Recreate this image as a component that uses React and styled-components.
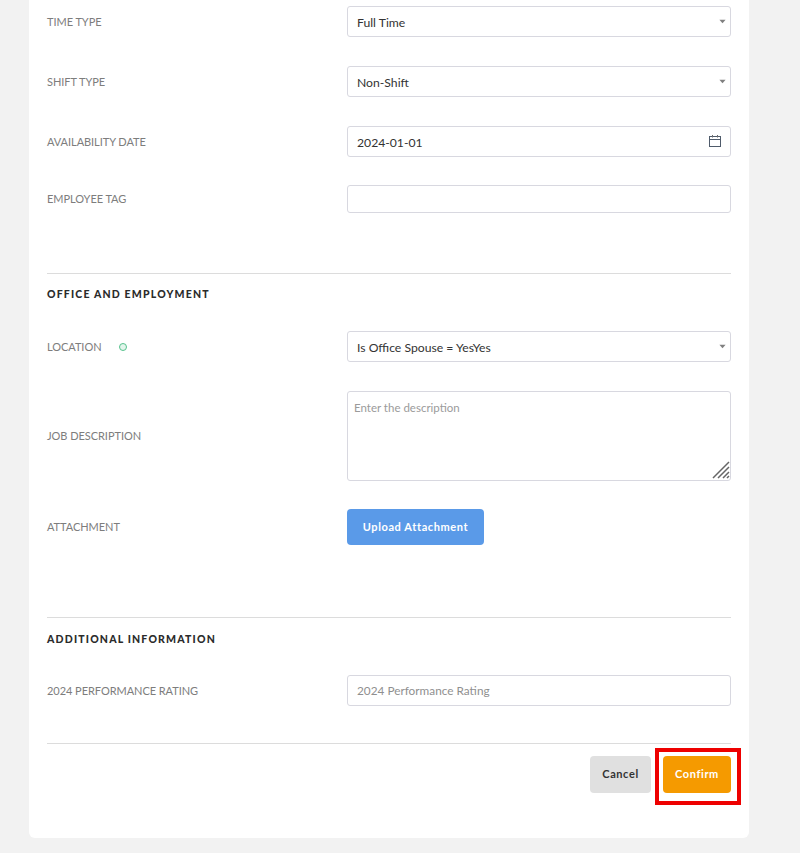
import React from 'react'
import styled, { createGlobalStyle } from 'styled-components'

const GlobalStyle = createGlobalStyle`
  html, body {
    margin: 0;
    padding: 0;
    background: #f2f2f2;
    font-family: Lato, "Liberation Sans", sans-serif;
  }
`

function Caret() {
  return (
    <CaretIcon viewBox="0 0 8 5">
      <path d="M0.5 0.5h7L4 4.5z" fill="#808080" />
    </CaretIcon>
  )
}

function CalendarIcon() {
  return (
    <DateIcon viewBox="0 0 12 12" fill="none">
      <rect x="0.5" y="1.5" width="11" height="10" stroke="#4f5b6b" />
      <path d="M0.5 4.5h11" stroke="#4f5b6b" />
      <path d="M3.5 0v2.5M8.5 0v2.5" stroke="#6b6b6b" />
    </DateIcon>
  )
}

function ResizeHandle() {
  return (
    <Handle viewBox="0 0 18 18" fill="none" stroke="#666" strokeWidth="1.5">
      <path d="M1 17L17 1M6 17L17 6M11 17L17 11M15 17l2-2" />
    </Handle>
  )
}

function App() {
  return (
    <Page>
      <GlobalStyle />
      <Card>
        <Row $gap={29}>
          <Label>TIME TYPE</Label>
          <SelectBox>Full Time<Caret /></SelectBox>
        </Row>
        <Row $gap={29}>
          <Label>SHIFT TYPE</Label>
          <SelectBox>Non-Shift<Caret /></SelectBox>
        </Row>
        <Row $gap={28}>
          <Label>AVAILABILITY DATE</Label>
          <SelectBox>2024-01-01<CalendarIcon /></SelectBox>
        </Row>
        <Row $gap={60}>
          <Label>EMPLOYEE TAG</Label>
          <TextField type="text" $height={28} />
        </Row>

        <Divider />
        <SectionTitle $top={14} $bottom={30}>OFFICE AND EMPLOYMENT</SectionTitle>
        <Row $gap={29}>
          <Label>
            LOCATION
            <StatusDot />
          </Label>
          <SelectBox>Is Office Spouse = YesYes<Caret /></SelectBox>
        </Row>
        <Row $gap={28}>
          <Label>JOB DESCRIPTION</Label>
          <AreaWrap>
            <TextArea placeholder="Enter the description" />
            <ResizeHandle />
          </AreaWrap>
        </Row>
        <Row $gap={72}>
          <Label>ATTACHMENT</Label>
          <div>
            <UploadButton>Upload Attachment</UploadButton>
          </div>
        </Row>

        <Divider />
        <SectionTitle $top={15} $bottom={29}>ADDITIONAL INFORMATION</SectionTitle>
        <Row $gap={37}>
          <Label>2024 PERFORMANCE RATING</Label>
          <TextField type="text" placeholder="2024 Performance Rating" $height={31} />
        </Row>

        <Divider />
        <Actions>
          <CancelButton>Cancel</CancelButton>
          <ConfirmWrap>
            <ConfirmButton>Confirm</ConfirmButton>
            <Highlight />
          </ConfirmWrap>
        </Actions>
      </Card>
    </Page>
  )
}

export default App

const Page = styled.div`
  width: 800px;
  height: 853px;
  overflow: hidden;
  background: #f2f2f2;
`

const Card = styled.div`
  box-sizing: border-box;
  width: 720px;
  height: 838px;
  margin-left: 29px;
  padding: 6px 18px 0;
  background: #fff;
  border-radius: 0 0 6px 6px;
`

const Row = styled.div`
  display: grid;
  grid-template-columns: 300px 384px;
  align-items: center;
  margin-bottom: ${(p) => p.$gap}px;
`

const Label = styled.div`
  display: flex;
  align-items: center;
  font-size: 11px;
  letter-spacing: -0.05px;
  line-height: 16px;
  color: #7d7d7d;
`

const StatusDot = styled.span`
  box-sizing: border-box;
  width: 8px;
  height: 8px;
  margin-left: 17px;
  margin-top: 1px;
  border: 1px solid #57c28d;
  border-radius: 50%;
  background: #e3f5ec;
`

const SelectBox = styled.div`
  box-sizing: border-box;
  display: flex;
  align-items: center;
  justify-content: space-between;
  height: 31px;
  padding: 1px 7px 0 9px;
  border: 1px solid #d8d8e0;
  border-radius: 3px;
  font-size: 12.2px;
  color: #333;
`

const CaretIcon = styled.svg`
  width: 7px;
  height: 5px;
  margin-top: -1px;
  margin-right: -3px;
`

const DateIcon = styled.svg`
  width: 12px;
  height: 12px;
  margin-right: 2px;
  margin-top: -3px;
`

const TextField = styled.input`
  box-sizing: border-box;
  width: 100%;
  height: ${(p) => p.$height}px;
  padding: 0 9px;
  border: 1px solid #d8d8e0;
  border-radius: 3px;
  outline: none;
  font-family: inherit;
  font-size: 11.8px;
  color: #333;

  &::placeholder {
    color: #8f8f8f;
    opacity: 1;
  }
`

const AreaWrap = styled.div`
  position: relative;
  height: 90px;
`

const TextArea = styled.textarea`
  display: block;
  box-sizing: border-box;
  width: 100%;
  height: 100%;
  padding: 8px 6px;
  border: 1px solid #d8d8e0;
  border-radius: 3px;
  outline: none;
  resize: none;
  font-family: inherit;
  font-size: 11.5px;
  line-height: 16px;

  &::placeholder {
    color: #9b9b9b;
    opacity: 1;
  }
`

const Handle = styled.svg`
  position: absolute;
  right: 1px;
  bottom: 2px;
  width: 18px;
  height: 18px;
`

const Divider = styled.div`
  height: 1px;
  background: #dcdcdc;
`

const SectionTitle = styled.div`
  margin: ${(p) => p.$top}px 0 ${(p) => p.$bottom}px;
  font-size: 10.5px;
  line-height: 13px;
  font-weight: 900;
  letter-spacing: 1.18px;
  color: #2b2b2b;
`

const BaseButton = styled.button`
  border: none;
  border-radius: 4px;
  padding: 0 0 2px;
  font-family: inherit;
  font-size: 11px;
  font-weight: 700;
  letter-spacing: 0.6px;
  cursor: pointer;
`

const UploadButton = styled(BaseButton)`
  display: block;
  width: 137px;
  height: 36px;
  background: #5a9ae8;
  color: #fff;
`

const Actions = styled.div`
  display: flex;
  justify-content: flex-end;
  gap: 12px;
  margin-top: 12px;
`

const CancelButton = styled(BaseButton)`
  width: 61px;
  height: 37px;
  background: #e0e0e0;
  color: #333;
`

const ConfirmWrap = styled.div`
  position: relative;
`

const ConfirmButton = styled(BaseButton)`
  display: block;
  width: 68px;
  height: 37px;
  background: #f59a00;
  color: #fff;
`

const Highlight = styled.div`
  position: absolute;
  left: -8px;
  right: -10px;
  top: -8px;
  bottom: -12px;
  border: 4px solid #ee0000;
  pointer-events: none;
`
